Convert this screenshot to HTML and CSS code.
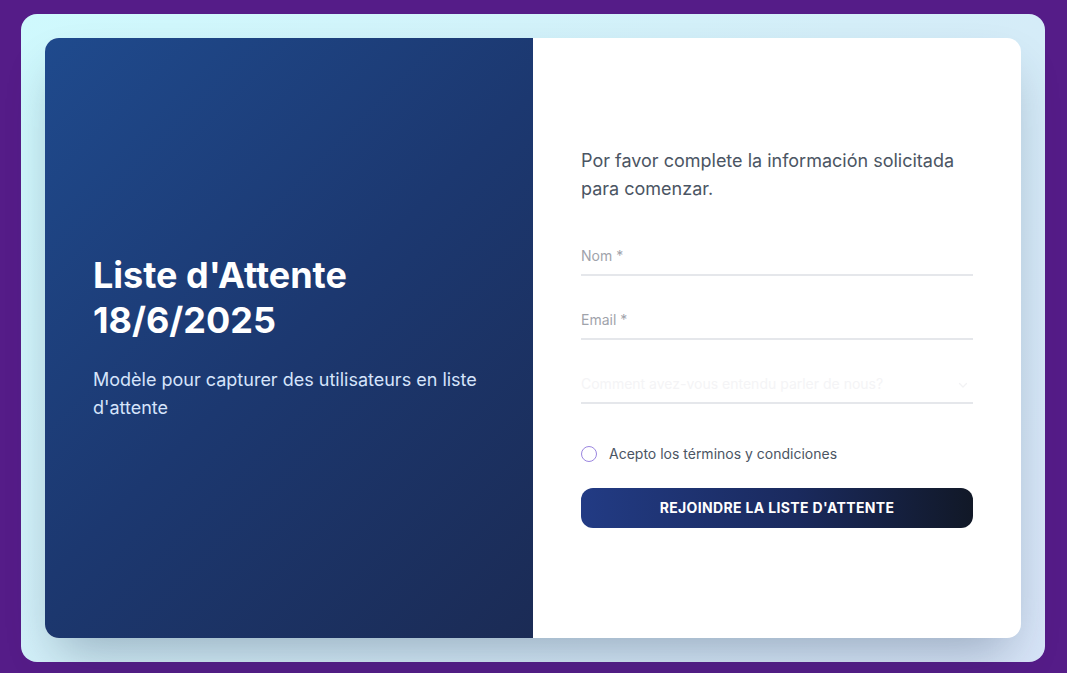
FILE: index.html
```html
<!DOCTYPE html>
<html lang="fr">
<head>
<meta charset="utf-8">
<title>Liste d'Attente</title>
<link rel="stylesheet" href="styles.css">
</head>
<body>
<div class="frame">
  <div class="card">
    <section class="hero">
      <h1 class="hero-title">Liste d'Attente<br>18/6/2025</h1>
      <p class="hero-sub">Modèle pour capturer des utilisateurs en liste d'attente</p>
    </section>
    <section class="panel">
      <form class="form">
        <p class="intro">Por favor complete la información solicitada para comenzar.</p>
        <input class="field" type="text" placeholder="Nom *">
        <input class="field" type="email" placeholder="Email *">
        <div class="select-wrap">
          <select class="field select">
            <option>Comment avez-vous entendu parler de nous?</option>
          </select>
          <svg class="chev" width="12" height="12" viewBox="0 0 12 12"><path d="M2.5 4.5 6 8l3.5-3.5" fill="none" stroke="#f2f2f4" stroke-width="1.3" stroke-linecap="round" stroke-linejoin="round"/></svg>
        </div>
        <label class="check">
          <span class="radio"></span>
          <span class="check-text">Acepto los términos y condiciones</span>
        </label>
        <button class="btn" type="button">REJOINDRE LA LISTE D'ATTENTE</button>
      </form>
    </section>
  </div>
</div>
</body>
</html>
```
FILE: styles.css
```css
* { box-sizing: border-box; }
html, body { margin: 0; }
body {
  background: #551c88;
  font-family: Inter, "Noto Sans", sans-serif;
  padding: 14px 0 11px 21px;
}
.frame {
  width: 1024px;
  height: 648px;
  padding: 24px;
  border-radius: 16px;
  background: linear-gradient(135deg, #cff9fd 0%, #d4eef8 50%, #d8e5f8 100%);
}
.card {
  height: 100%;
  display: grid;
  grid-template-columns: 1fr 1fr;
  border-radius: 14px;
  overflow: hidden;
  background: #fff;
  box-shadow: 0 25px 50px -12px rgba(30, 50, 80, 0.33);
}
.hero {
  background: linear-gradient(135deg, #1f4a8d 0%, #1c3870 50%, #1b2b55 100%);
  padding: 0 48px;
  display: flex;
  flex-direction: column;
  justify-content: center;
  color: #fff;
}
.hero-title {
  margin: -2px 0 0;
  font-size: 36px;
  line-height: 45px;
  font-weight: 700;
}
.hero-sub {
  margin: 23px 0 0;
  font-size: 18px;
  line-height: 28px;
  color: #d6e4fb;
}
.panel {
  padding: 0 48px 2px;
  display: flex;
  flex-direction: column;
  justify-content: center;
}
.form {
  display: flex;
  flex-direction: column;
}
.intro {
  margin: 0 0 35px;
  font-size: 18px;
  line-height: 28px;
  color: #4b5563;
}
.field {
  display: block;
  width: 100%;
  height: 38px;
  padding: 8px 0;
  border: 0;
  border-bottom: 2px solid #e5e7eb;
  font-family: inherit;
  font-size: 14px;
  line-height: 20px;
  color: #374151;
  background: transparent;
  outline: none;
  margin-bottom: 26px;
}
.field::placeholder { color: #9fa3ab; }
.select-wrap { position: relative; }
.select {
  appearance: none;
  -webkit-appearance: none;
  color: #f4f4f6;
  border-radius: 0;
  margin-bottom: 40px;
}
.chev {
  position: absolute;
  right: 4px;
  top: 13px;
}
.check {
  display: flex;
  align-items: center;
  gap: 12px;
  height: 20px;
  margin-bottom: 24px;
}
.radio {
  width: 16px;
  height: 16px;
  border-radius: 50%;
  border: 1px solid #9b86e0;
  background: #fff;
}
.check-text {
  font-size: 14px;
  color: #4b5563;
}
.btn {
  height: 40px;
  border: 0;
  border-radius: 12px;
  background: linear-gradient(90deg, #223b84 0%, #1a2a5e 55%, #111827 100%);
  color: #fff;
  font-family: inherit;
  font-size: 14px;
  font-weight: 700;
  letter-spacing: 0.35px;
}
```
